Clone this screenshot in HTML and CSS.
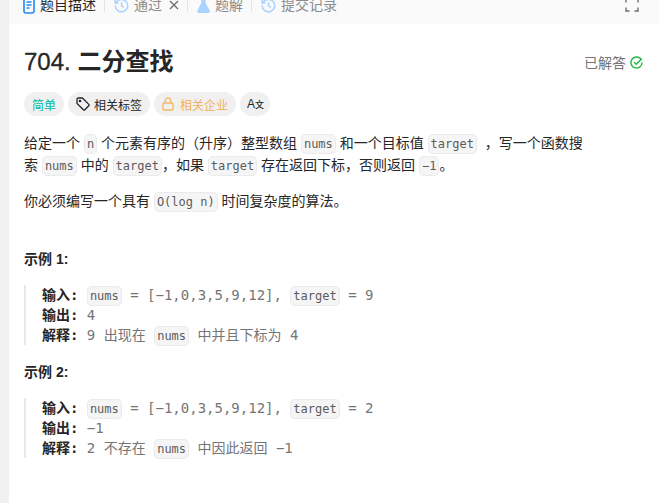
FILE: index.html
```html
<!DOCTYPE html>
<html>
<head>
  <title>704. 二分查找</title>
  <link rel="stylesheet" href="styles.css">
</head>
<body>
  <div class="page">
    <div class="gutter"></div>
    <div class="panel">
      <div class="tabbar">
        <div class="tab tab-first active">
          <svg width="12" height="18" viewBox="0 0 12 18"><rect x="1" y="1" width="10" height="16" rx="2" fill="none" stroke="#2189f5" stroke-width="1.6"/><path d="M3.5 6h5M3.5 9h5M3.5 12h3" stroke="#2189f5" stroke-width="1.4" fill="none"/></svg>
          <span>题目描述</span>
        </div>
        <div class="sep"></div>
        <div class="tab">
          <svg width="15" height="15" viewBox="0 0 16 16" fill="none" stroke="#a8d2ff" stroke-width="1.6"><path d="M2.2 5A6.6 6.6 0 1 1 1.4 8"/><path d="M1.2 1.8V5.2H4.6"/><path d="M8 4.4V8.4L10.6 10"/></svg>
          <span>通过</span>
          <svg class="icon-close" width="10" height="10" viewBox="0 0 10 10" stroke="#707070" stroke-width="1.4"><path d="M1 1L9 9M9 1L1 9"/></svg>
        </div>
        <div class="sep"></div>
        <div class="tab">
          <svg width="13" height="18" viewBox="0 0 13 18"><path d="M4.4 1H8.6V7L12.6 14.4C13.2 15.8 12.4 17 11 17H2C.6 17-.2 15.8.4 14.4L4.4 7Z" fill="#a8d2ff"/></svg>
          <span>题解</span>
        </div>
        <div class="sep"></div>
        <div class="tab">
          <svg width="15" height="15" viewBox="0 0 16 16" fill="none" stroke="#a8d2ff" stroke-width="1.6"><path d="M2.2 5A6.6 6.6 0 1 1 1.4 8"/><path d="M1.2 1.8V5.2H4.6"/><path d="M8 4.4V8.4L10.6 10"/></svg>
          <span>提交记录</span>
        </div>
        <div class="tab-tools">
          <svg width="14" height="14" viewBox="0 0 14 14" fill="none" stroke="#6e6e6e" stroke-width="1.4"><path d="M1 4.5V1H4.5M9.5 1H13V4.5M13 9.5V13H9.5M4.5 13H1V9.5"/></svg>
        </div>
      </div>

      <div class="content">
        <div class="title-row">
          <h1 class="title"><span class="title-num">704.</span> 二分查找</h1>
          <div class="solved">
            <span>已解答</span>
            <svg width="13" height="13" viewBox="0 0 14 14" fill="none" stroke="#1cba3f" stroke-width="1.5"><path d="M12.4 4.4A6 6 0 1 0 13 7"/><path d="M4.4 6.6L6.8 9L12.6 3"/></svg>
          </div>
        </div>

        <div class="tags">
          <div class="tag tag-easy">简单</div>
          <div class="tag">
            <svg width="14" height="14" viewBox="0 0 14 14" fill="none" stroke="#262626" stroke-width="1.3"><path d="M1 2.2C1 1.5 1.5 1 2.2 1H6.4L12.8 7.4C13.2 7.8 13.2 8.4 12.8 8.8L8.8 12.8C8.4 13.2 7.8 13.2 7.4 12.8L1 6.4Z"/><circle cx="4" cy="4" r=".7"/></svg>
            <span>相关标签</span>
          </div>
          <div class="tag tag-company">
            <svg width="12" height="14" viewBox="0 0 12 14" fill="none" stroke="#f4b860" stroke-width="1.3"><rect x="1" y="6" width="10" height="7" rx="1.2"/><path d="M3.2 6V3.6a2.8 2.8 0 0 1 5.6 0V6"/></svg>
            <span>相关企业</span>
          </div>
          <div class="tag tag-lang"><span>A</span><span class="tag-lang-small">文</span></div>
        </div>

        <div class="description">
          <p>给定一个 <code>n</code> 个元素有序的（升序）整型数组 <code>nums</code> 和一个目标值 <code>target</code> &nbsp;，写一个函数搜索 <code>nums</code> 中的 <code>target</code>，如果 <code>target</code> 存在返回下标，否则返回 <code>−1</code>。</p>
          <p>你必须编写一个具有 <code>O(log n)</code> 时间复杂度的算法。</p>
        </div>

        <h2 class="example-title example-first">示例 1:</h2>
        <div class="example">
          <div><strong>输入:</strong> <code>nums</code> = [−1,0,3,5,9,12], <code>target</code> = 9</div>
          <div><strong>输出:</strong> 4</div>
          <div><strong>解释:</strong> 9 出现在 <code>nums</code> 中并且下标为 4</div>
        </div>

        <h2 class="example-title">示例 2:</h2>
        <div class="example">
          <div><strong>输入:</strong> <code>nums</code> = [−1,0,3,5,9,12], <code>target</code> = 2</div>
          <div><strong>输出:</strong> −1</div>
          <div><strong>解释:</strong> 2 不存在 <code>nums</code> 中因此返回 −1</div>
        </div>
      </div>
    </div>
  </div>
</body>
</html>
```

FILE: styles.css
```css
body {
  margin: 0;
  background-color: #fff;
  color: #262626;
  font-family: "Liberation Sans", "Noto Sans CJK SC", sans-serif;
  font-size: 14px;
  overflow: hidden;
}

.page {
  display: flex;
  height: 503px;
}

.gutter {
  width: 9px;
  flex-shrink: 0;
  background-color: #f0f0f0;
}

.panel {
  flex: 1;
  min-width: 0;
}

/* tab bar is scrolled off the top in the reference, so the items overhang it */
.tabbar {
  display: flex;
  align-items: flex-end;
  height: 24px;
  box-sizing: border-box;
  padding: 0 20px 3px 14px;
  background-color: #fafafa;
  color: #8c8c8c;
}

.tab {
  display: flex;
  align-items: center;
  gap: 5px;
  height: 32px;
  line-height: 20px;
}

.tab.active {
  color: #262626;
}

.tab-first {
  gap: 5px;
}

.icon-close {
  margin-left: 2px;
}

.sep {
  width: 1px;
  height: 14px;
  margin: 0 9px 9px 8px;
  background-color: #e4e4e4;
}

.tab-tools {
  display: flex;
  align-items: center;
  height: 32px;
  margin-left: auto;
}

.content {
  padding: 22px 16px 0 15px;
}

.title-row {
  display: flex;
  align-items: center;
  justify-content: space-between;
  height: 32px;
}

.title {
  margin: 0;
  font-size: 24px;
  line-height: 32px;
  font-weight: 700;
}

.title-num {
  font-weight: 400;
  -webkit-text-stroke: 0.3px #262626;
}

.solved {
  display: flex;
  align-items: center;
  gap: 4px;
  color: #737373;
}

.tags {
  display: flex;
  gap: 4px;
  margin-top: 14px;
}

.tag {
  display: flex;
  align-items: center;
  gap: 4px;
  height: 24px;
  padding: 0 8px;
  border-radius: 12px;
  background-color: #f0f0f0;
  font-size: 12px;
}

.tag-easy {
  color: #00b8a3;
}

.tag-company {
  gap: 6px;
  color: #f2b15a;
}

.tag-lang {
  gap: 0;
  padding: 0 6px 0 7px;
}

.tag-lang-small {
  font-size: 9px;
  font-weight: 500;
}

.description {
  max-width: 566px;
  margin-top: 16px;
  line-height: 22px;
}

.description p {
  margin: 0 0 14px;
}

code {
  padding: 2px;
  border: 1px solid #ebebeb;
  border-radius: 5px;
  background-color: #f5f5f5;
  color: #5c5c5c;
  font-family: "DejaVu Sans Mono", "Noto Sans CJK SC", monospace;
  font-size: 12px;
  line-height: 1;
}

.example-title {
  margin: 16px 0 15px;
  font-size: 14px;
  line-height: 22px;
  font-weight: 700;
}

.example-first {
  margin-top: 36px;
}

.example {
  padding-left: 16px;
  border-left: 2px solid #e8e8e8;
  color: #757575;
  font-family: "DejaVu Sans Mono", "Noto Sans CJK SC", monospace;
  font-size: 14px;
  line-height: 20px;
}

.example strong {
  color: #262626;
}
```
